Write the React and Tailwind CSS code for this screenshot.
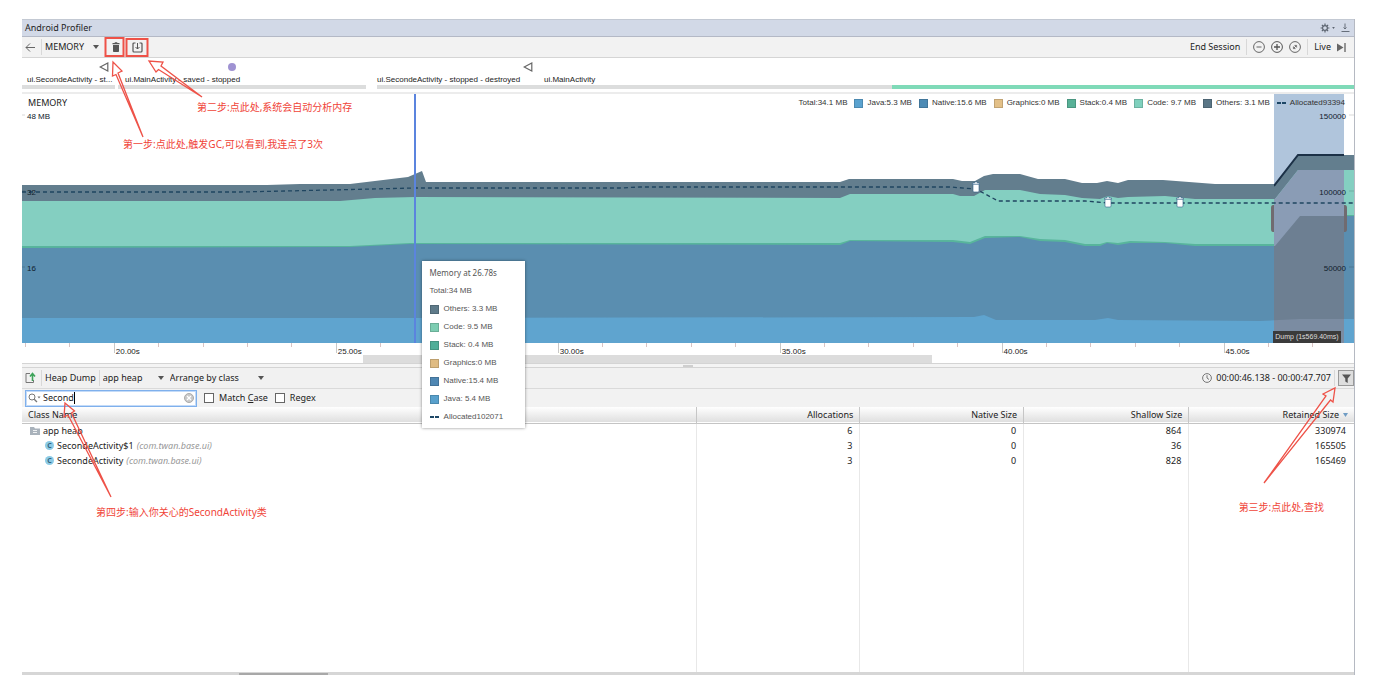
import React from "react";

const colors = {
  others: "#637e8e",
  code: "#84cfc1",
  stack: "#58b59c",
  native: "#5a8eb0",
  java: "#5fa4cf",
};

const activities = [
  { size: 93, label: "ui.SecondeActivity - st...", pad: "pl-[5px]", bar: "bg-[#dcdddd]" },
  { size: 3 },
  { size: 248, label: "ui.MainActivity - saved - stopped", pad: "pl-[7px]", bar: "bg-[#dcdddd]" },
  { size: 11 },
  { size: 155, label: "ui.SecondeActivity - stopped - destroyed", pad: "pl-0", bar: "bg-[#dcdddd]" },
  { size: 360, label: "ui.MainActivity", pad: "pl-3", bar: "bg-[#dcdddd]" },
  { size: 462, label: "", pad: "pl-0", bar: "bg-[#7fdab8]" },
];

const legend = [
  { label: "Java:5.3 MB", swatch: "bg-[#5aa2cf]" },
  { label: "Native:15.6 MB", swatch: "bg-[#4d8bb5]" },
  { label: "Graphics:0 MB", swatch: "bg-[#e3c088]" },
  { label: "Stack:0.4 MB", swatch: "bg-[#58b197]" },
  { label: "Code: 9.7 MB", swatch: "bg-[#7fd0bd]" },
  { label: "Others: 3.1 MB", swatch: "bg-[#5a7686]" },
];

const tooltipRows = [
  { label: "Others: 3.3 MB", swatch: "bg-[#5f7b8a]" },
  { label: "Code: 9.5 MB", swatch: "bg-[#7dcdb2]" },
  { label: "Stack: 0.4 MB", swatch: "bg-[#4fae98]" },
  { label: "Graphics:0 MB", swatch: "bg-[#dfbb82]" },
  { label: "Native:15.4 MB", swatch: "bg-[#4f87b3]" },
  { label: "Java: 5.4 MB", swatch: "bg-[#58a0cc]" },
];

const heapRows = [
  { name: "SecondeActivity$1", pkg: "(com.twan.base.ui)", values: [3, 0, 36, 165505] },
  { name: "SecondeActivity", pkg: "(com.twan.base.ui)", values: [3, 0, 828, 165469] },
];

const seconds = new Array(30).fill(0).map((_, i) => 18 + i);

const othersTop =
  "22,185 267,185 300,184 350,184 408,177 422,171 426,182 840,182 849,179 953,179 962,181 975,181 984,176 993,174 1020,174 1038,179 1065,179 1082,183 1097,183 1107,181 1118,183 1128,180 1163,180 1215,184 1275,184 1298,155 1354,155";
const codeTop =
  "22,201 340,201 375,198 415,197 840,198 850,194 953,194 960,196 974,196 985,190 1020,190 1040,194 1065,195 1082,198 1100,199 1108,196 1118,198 1128,197 1165,196 1195,199 1275,199 1298,170 1354,170";
const stackTop =
  "22,246 350,246 410,243 840,243 850,240 953,240 970,242 985,236 1020,236 1040,239 1065,240 1085,244 1100,244 1107,242 1118,243 1130,241 1165,242 1195,244 1275,244 1300,215 1354,215";
const nativeTop =
  "22,248 350,247 410,244 840,245 850,241 953,242 970,244 985,238 1020,237 1040,241 1065,242 1085,246 1100,246 1107,243 1118,245 1130,243 1165,243 1195,246 1275,246 1300,216 1354,216";
const javaTop =
  "22,318 410,318 974,317 984,315 996,320 1095,320 1108,318 1118,320 1260,321 1300,319 1354,319";

const area = (top) => `22,343 ${top} 1354,343`;

const Arrow = ({ className = "" }) => (
  <svg viewBox="0 0 6 4" className={`pointer-events-none h-1 w-1.5 ${className}`}>
    <path d="M0 0h6L3 4z" fill="#555" />
  </svg>
);

const Divider = ({ className = "" }) => (
  <div className={`h-4 w-px bg-[#d8d8d8] ${className}`} />
);

const Dropdown = ({ label, width }) => (
  <div className={`grid items-center ${width}`}>
    <select
      aria-label={label}
      className="col-start-1 row-start-1 w-full appearance-none bg-transparent outline-none"
    >
      <option>{label}</option>
    </select>
    <Arrow className="col-start-1 row-start-1 justify-self-end" />
  </div>
);

const TitleBar = () => (
  <div className="flex h-[18px] items-center border-b border-[#b4b9c6] border-t border-t-[#c3c9d3] bg-[#d2d9e7] pl-[3px] pr-1 text-[9px]">
    <h1 className="flex-1">Android Profiler</h1>
    <button aria-label="Settings" className="mr-1.5 flex items-center gap-0.5">
      <svg viewBox="0 0 10 10" className="h-2.5 w-2.5" fill="none" stroke="#5c6470">
        <circle cx="5" cy="5" r="2.4" strokeWidth="1.2" />
        <path
          d="M5 .6v1.6M5 7.8v1.6M.6 5h1.6M7.8 5h1.6M1.9 1.9l1.1 1.1M7 7l1.1 1.1M8.1 1.9L7 3M3 7L1.9 8.1"
          strokeWidth="1.2"
        />
      </svg>
      <svg viewBox="0 0 4 3" className="h-[2px] w-[3px]">
        <path d="M0 0h4L2 3z" fill="#5c6470" />
      </svg>
    </button>
    <button aria-label="Hide">
      <svg viewBox="0 0 9 10" className="h-2.5 w-[9px]" fill="none" stroke="#666e7a">
        <path d="M4 .5v5.5M2.5 4.5L4 6l1.5-1.5M.5 8.5h8" />
      </svg>
    </button>
  </div>
);

const Toolbar = () => (
  <div className="flex h-[21px] items-center border-b border-[#d5d5d5] bg-[#f2f2f2] pl-[3px] pr-2">
    <button aria-label="Back">
      <svg viewBox="0 0 10 9" className="h-[9px] w-2.5" fill="none" stroke="#666">
        <path d="M10 4.5H1M5 .5l-4 4 4 4" />
      </svg>
    </button>
    <Divider className="ml-1.5 mr-[3px]" />
    <Dropdown label="MEMORY" width="w-[54px]" />
    <button aria-label="Force garbage collection" className="ml-[13px]">
      <svg viewBox="0 0 8 10" className="h-2.5 w-2" fill="#555">
        <path d="M.5 1h2l.5-.8h2l.5.8h2v1.2h-7zM1 3h6v6.2q0 .8-.8.8H1.8q-.8 0-.8-.8z" />
      </svg>
    </button>
    <button aria-label="Dump Java heap" className="ml-3">
      <svg viewBox="0 0 11 11" className="h-[11px] w-[11px]" fill="none" stroke="#555">
        <path d="M3.5 1H2Q1 1 1 2v7q0 1 1 1h7q1 0 1-1V2q0-1-1-1H7.5" strokeWidth="1.2" />
        <path d="M5.5 1v6M3.5 5l2 2 2-2" />
      </svg>
    </button>
    <div className="flex-1" />
    <button>End Session</button>
    <Divider className="mx-1.5" />
    <div className="flex gap-1.5">
      <button aria-label="Zoom out">
        <svg viewBox="0 0 12 12" className="h-3 w-3" fill="none" stroke="#666">
          <circle cx="6" cy="6" r="5.4" />
          <path d="M3.5 6h5" />
        </svg>
      </button>
      <button aria-label="Zoom in">
        <svg viewBox="0 0 12 12" className="h-3 w-3" fill="none" stroke="#555">
          <circle cx="6" cy="6" r="5.4" />
          <path d="M3 6h6M6 3v6" strokeWidth="1.3" />
        </svg>
      </button>
      <button aria-label="Reset zoom">
        <svg viewBox="0 0 12 12" className="h-3 w-3" fill="none" stroke="#666">
          <circle cx="6" cy="6" r="5.4" />
          <path d="M4.3 5.5v2.2h2.2zM7.700 6.5V4.3H5.5z" fill="#666" strokeWidth=".4" />
          <path d="M4.8 7.2l2.4-2.4" strokeWidth=".8" />
        </svg>
      </button>
    </div>
    <Divider className="mx-1.5" />
    <button className="flex items-center gap-1.5">
      Live
      <svg viewBox="0 0 9 9" className="h-[9px] w-[9px]">
        <path d="M0 .5l6.5 4L0 8.5z" fill="#666" />
        <path d="M8 0v9" stroke="#555" strokeWidth="1.2" />
      </svg>
    </button>
  </div>
);

const BackEvent = ({ className }) => (
  <svg viewBox="0 0 10 10" className={`absolute top-1 h-2.5 w-2.5 ${className}`}>
    <path d="M8.8 1v8L1.2 5z" fill="none" stroke="#666" strokeWidth="1.2" />
  </svg>
);

const Events = () => (
  <div className="relative border-b-2 border-[#ececec] pt-[17px] pb-[3px] font-['Liberation_Sans',sans-serif] text-[8px] leading-[10px]">
    <BackEvent className="left-[5.8%]" />
    <div className="absolute left-[15.5%] top-[5px] h-2 w-2 rounded-full bg-[#9f92d2]" />
    <BackEvent className="left-[37.6%]" />
    <div className="flex">
      {activities.map((item, i) => (
        <div key={i} className="min-w-0 basis-0" style={{ flexGrow: item.size }}>
          <div className={`h-2.5 whitespace-nowrap ${item.pad || ""}`}>{item.label}</div>
          <div className={`h-1 ${item.bar || ""}`} />
        </div>
      ))}
    </div>
  </div>
);

const Swatch = ({ color }) => (
  <span className={`h-[9px] w-[9px] border border-black/15 ${color}`} />
);

const Dashes = () => (
  <svg viewBox="0 0 9 2" className="h-0.5 w-[9px]">
    <path d="M0 1h4M5 1h4" stroke="#1d4766" strokeWidth="2" />
  </svg>
);

const Collection = ({ x, y }) => (
  <g transform={`translate(${x} ${y})`} fill="#fff" stroke="#2f5f86" strokeWidth=".6">
    <path d="M-3 -3h6v7q0 1-1 1h-4q-1 0-1-1z" />
    <path d="M-3.5 -4h2v-1h3v1h2v1.2h-7z" />
  </g>
);

const Chart = () => (
  <section className="relative h-[249px] font-['Liberation_Sans',sans-serif] text-[8px] leading-[10px]">
    <svg
      viewBox="22 94 1332 249"
      preserveAspectRatio="none"
      className="absolute inset-0 h-full w-full"
    >
      <defs>
        <clipPath id="dump">
          <rect x="1274" y="94" width="70" height="249" />
        </clipPath>
      </defs>
      <rect x="1274" y="94" width="70" height="249" fill="#b0c5dc" />
      <polygon points={area(othersTop)} fill={colors.others} />
      <polygon points={area(codeTop)} fill={colors.code} />
      <polygon points={area(stackTop)} fill={colors.stack} />
      <polygon points={area(nativeTop)} fill={colors.native} />
      <polygon points={area(javaTop)} fill={colors.java} />
      <g clipPath="url(#dump)">
        <polygon points={area(codeTop)} fill="#8a9cb5" />
        <polygon points={area(nativeTop)} fill="#6d7f92" />
        <polygon points={area(javaTop)} fill="#7b8ca2" />
        <polyline points="1274,186 1298,155 1344,155" fill="none" stroke="#1c3147" strokeWidth="2" />
      </g>
      <path d="M1274 205h-1q-2 0-2 3v21q0 3 2 3h1zM1344 205h1q2 0 2 3v21q0 3-2 3h-1z" fill="#706b70" />
      <polyline
        points="22,192 240,192 330,190 415,188 620,188 640,187 950,187 976,189 998,201 1085,201 1108,203 1354,203"
        fill="none"
        stroke="#1f4560"
        strokeWidth="1.3"
        strokeDasharray="4 3"
      />
      <Collection x={976} y={187} />
      <Collection x={1108} y={202} />
      <Collection x={1180} y={202} />
      <path d="M415 94v249" stroke="#5b84de" strokeWidth="2" />
      <path d="M22 115h3M22 191h3M22 267h3M1349 115h5M1349 191h5M1349 267h5" stroke="#000" strokeOpacity=".15" />
    </svg>
    <div className="relative flex justify-between pl-1.5 pr-[9px] pt-1">
      <h2 className="font-['Noto_Sans',sans-serif] text-[9px]">MEMORY</h2>
      <div className="flex items-center gap-[7px] text-[#333]">
        <span>Total:34.1 MB</span>
        {legend.map((item) => (
          <span key={item.label} className="flex items-center gap-1">
            <Swatch color={item.swatch} />
            {item.label}
          </span>
        ))}
        <span className="flex items-center gap-1">
          <Dashes />
          Allocated93394
        </span>
      </div>
    </div>
    <div className="relative flex flex-col gap-[66px] pl-[5px] pr-2 pt-1 text-[#10202c]">
      <div className="flex justify-between"><span>48 MB</span><span>150000</span></div>
      <div className="flex justify-between"><span>32</span><span>100000</span></div>
      <div className="flex justify-between"><span>16</span><span>50000</span></div>
    </div>
    <div className="absolute bottom-0 right-[1%] bg-[#3b3b3b] px-0.5 py-px text-[7px] text-[#ddd]">
      Dump (1s569.40ms)
    </div>
    <div className="absolute left-[30%] top-[167px] z-10 flex w-[103px] flex-col gap-2 bg-white px-2 pb-1.5 pt-[7px] text-[#555] shadow-[0_0_3px_rgba(0,0,0,0.45)]">
      <p className="font-['Noto_Sans',sans-serif]">Memory at 26.78s</p>
      <p>Total:34 MB</p>
      {tooltipRows.map((item) => (
        <p key={item.label} className="flex items-center gap-[5px]">
          <Swatch color={item.swatch} />
          {item.label}
        </p>
      ))}
      <p className="flex items-center gap-[5px]">
        <Dashes />
        Allocated102071
      </p>
    </div>
  </section>
);

const TimeAxis = () => (
  <div className="relative h-5 overflow-hidden bg-white font-['Liberation_Sans',sans-serif] text-[8px] leading-[10px]">
    <div className="absolute bottom-0 left-[25.6%] h-2 w-[42.7%] bg-[#dcdcdc]" />
    <div className="relative flex">
      <div className="w-[3px] shrink-0" />
      {seconds.map((s) => (
        <div key={s} className="h-2.5 w-1/30 shrink-0">
          {s % 5 === 0 ? (
            <div className="h-2.5 whitespace-nowrap border-l border-[#c8c8c8] pl-px pt-1">{s}.00s</div>
          ) : (
            <div className="h-1 border-l border-[#d9c4c4]" />
          )}
        </div>
      ))}
    </div>
  </div>
);

const HeapToolbar = () => (
  <div className="flex h-[21px] items-center border-b border-[#dadada] bg-[#f1f1f1] pl-[3px]">
    <button aria-label="Export heap dump">
      <svg viewBox="0 0 11 12" className="h-3 w-[11px]" fill="none">
        <path d="M5 1.5H1v9h7.5V8" stroke="#777" />
        <path d="M7.5 9V2.5M5 4.5L7.5 1.5 10 4.5" stroke="#3da35a" strokeWidth="1.6" />
      </svg>
    </button>
    <Divider className="ml-[5px] mr-[3px]" />
    <span>Heap Dump</span>
    <Divider className="mx-[3px]" />
    <Dropdown label="app heap" width="w-[61px]" />
    <div className="w-1.5" />
    <Dropdown label="Arrange by class" width="w-[94px]" />
    <div className="flex-1" />
    <svg viewBox="0 0 10 10" className="mr-1 h-2.5 w-2.5" fill="none" stroke="#777">
      <circle cx="5" cy="5" r="4.4" />
      <path d="M5 2.2V5l2 1.5" />
    </svg>
    <span>00:00:46.138 - 00:00:47.707</span>
    <Divider className="mx-[3px]" />
    <button aria-label="Filter" className="flex h-4 w-4 items-center justify-center border border-[#999] bg-[#dedede]">
      <svg viewBox="0 0 9 9" className="h-[9px] w-[9px]">
        <path d="M0 .5h9L5.7 4.5V9L3.3 7.5v-3z" fill="#555" />
      </svg>
    </button>
  </div>
);

const SearchBar = () => (
  <div className="flex h-[18px] items-center bg-[#f2f2f2] pl-[3px]">
    <div className="flex h-[17px] w-[172px] items-center border border-[#7fb0ec] bg-white px-0.5 shadow-[inset_0_0_0_1px_#c4dbf8]">
      <svg viewBox="0 0 13 10" className="h-2.5 w-[13px]" fill="none" stroke="#777">
        <circle cx="4" cy="4" r="3" />
        <path d="M6.2 6.2L9 9" strokeWidth="1.3" />
        <path d="M9.5 3.5h3L11 5.5z" fill="#777" stroke="none" />
      </svg>
      <div className="ml-0.5 flex flex-1 items-center">
        <input
          aria-label="Filter classes"
          defaultValue="Second"
          className="w-[31px] bg-transparent outline-none"
        />
        <span className="h-3 w-px bg-black" />
      </div>
      <button aria-label="Clear">
        <svg viewBox="0 0 10 10" className="h-2.5 w-2.5">
          <circle cx="5" cy="5" r="4.5" fill="#c9c9c9" stroke="#aaa" />
          <path d="M3 3l4 4M7 3L3 7" stroke="#fff" strokeWidth="1.2" />
        </svg>
      </button>
    </div>
    <label className="ml-[7px] flex items-center gap-[5px]">
      <input type="checkbox" className="h-2.5 w-2.5 appearance-none border border-[#666] bg-white" />
      <span>Match <u>C</u>ase</span>
    </label>
    <label className="ml-[7px] flex items-center gap-[5px]">
      <input type="checkbox" className="h-2.5 w-2.5 appearance-none border border-[#666] bg-white" />
      <span>Re<u>g</u>ex</span>
    </label>
  </div>
);

const HeapTable = () => (
  <table className="w-full table-fixed border-collapse text-right leading-[14px]">
    <colgroup>
      <col className="w-[50.6%]" />
      <col className="w-[12.3%]" />
      <col className="w-[12.3%]" />
      <col className="w-[12.4%]" />
      <col className="w-[12.4%]" />
    </colgroup>
    <thead>
      <tr className="h-4 border-b border-[#c4c4c4] bg-linear-to-b from-white to-[#dfdfdf]">
        <th className="border-r border-[#c6c6c6] pl-1.5 text-left font-normal">Class Name</th>
        <th className="border-r border-[#c6c6c6] pr-1.5 font-normal">Allocations</th>
        <th className="border-r border-[#c6c6c6] pr-1.5 font-normal">Native Size</th>
        <th className="border-r border-[#c6c6c6] pr-1.5 font-normal">Shallow Size</th>
        <th className="pr-1.5 font-normal">
          <div className="flex items-center justify-end gap-1">
            Retained Size
            <svg viewBox="0 0 5 4" className="h-1 w-[5px]">
              <path d="M0 0h5L2.5 4z" fill="#6f9cc4" />
            </svg>
          </div>
        </th>
      </tr>
    </thead>
    <tbody className="[&_td]:border-r [&_td]:border-[#e8e8e8] [&_td]:pr-[7px] [&_td:last-child]:border-r-0 [&_td:last-child]:pr-2">
      <tr className="h-[15px]">
        <td>
          <div className="flex items-center gap-[3px] pl-2">
            <svg viewBox="0 0 10 8" className="h-2 w-2.5">
              <path d="M0 0h4l1 1.5h5V8H0z" fill="#a9b2bb" />
              <path d="M3 3.5h4M3 5.5h4" stroke="#fff" strokeWidth=".8" />
            </svg>
            app heap
          </div>
        </td>
        <td>6</td>
        <td>0</td>
        <td>864</td>
        <td>330974</td>
      </tr>
      {heapRows.map((row) => (
        <tr key={row.name} className="h-[15px]">
          <td>
            <div className="flex items-center gap-[3px] pl-[23px]">
              <span className="flex h-[9px] w-[9px] items-center justify-center rounded-full bg-[#8ccbe6] text-[7px] font-bold leading-[9px] text-[#35657f]">
                C
              </span>
              {row.name}
              <i className="text-[#999]">{row.pkg}</i>
            </div>
          </td>
          {row.values.map((value, i) => (
            <td key={i}>{value}</td>
          ))}
        </tr>
      ))}
      <tr className="h-[204px]">
        <td />
        <td />
        <td />
        <td />
        <td />
      </tr>
    </tbody>
  </table>
);

const Notes = () => (
  <div className="pointer-events-none absolute inset-0 z-20 whitespace-nowrap font-['Noto_Sans','Noto_Sans_CJK_SC',sans-serif] text-[10px] leading-3 text-[#f04438]">
    <svg viewBox="22 19 320 500" className="absolute left-0 top-0 h-[500px] w-80" fill="none" stroke="#ee5248">
      <path d="M105.5 38h18v18h-18zM126.5 39h21v17h-21z" strokeWidth="2" />
      <path d="M143 137L118 73l4-2-9-9-.5 14 3.5-1.5z" strokeWidth="1.3" />
      <path d="M202 97L161 66l2-4-14-1 7 11 2.5-2.5z" strokeWidth="1.3" />
      <path d="M111 497L71.5 413l3-2-9.5-8-1 14 4-2z" strokeWidth="1.3" />
    </svg>
    <svg viewBox="1254 380 100 110" className="absolute right-0 top-[361px] h-[110px] w-[100px]" fill="none" stroke="#ee5248">
      <path d="M1264 483l62-87-3-2 12-6-2 14-2.5-2z" strokeWidth="1.3" />
    </svg>
    <p className="absolute left-[175px] top-[82px]">第二步:点此处,系统会自动分析内存</p>
    <p className="absolute left-[101px] top-[119px]">第一步:点此处,触发GC,可以看到,我连点了3次</p>
    <p className="absolute left-[74px] top-[487px]">第四步:输入你关心的SecondActivity类</p>
    <p className="absolute right-[30px] top-[482px]">第三步:点此处,查找</p>
  </div>
);

const App = () => {
  return (
    <div className="min-h-screen bg-white pb-3 pl-[22px] pr-[23px] pt-[19px] font-['Noto_Sans',sans-serif] text-[9px] leading-3 text-[#222]">
      <main className="relative border-r border-[#b5b9c2]">
        <TitleBar />
        <Toolbar />
        <Events />
        <Chart />
        <TimeAxis />
        <div className="flex h-[5px] items-center justify-center border-y border-[#d4d4d4] bg-[#f4f4f4]">
          <div className="h-0.5 w-2.5 bg-[#cfcfcf]" />
        </div>
        <HeapToolbar />
        <SearchBar />
        <HeapTable />
        <div className="h-[3px] bg-[#d6d6d6] pt-px">
          <div className="ml-[16.3%] h-0.5 w-[6.7%] bg-[#a8a8a8]" />
        </div>
        <Notes />
      </main>
    </div>
  );
};

export default App;
